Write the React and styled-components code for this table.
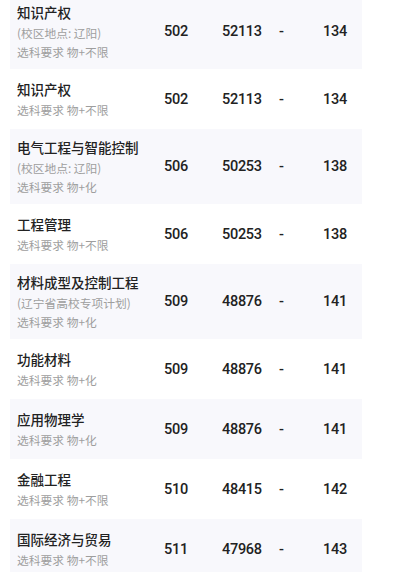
import React from "react";
import styled, { createGlobalStyle } from "styled-components";

const GlobalStyle = createGlobalStyle`
	html, body {
		margin: 0;
		padding: 0;
		background: #ffffff;
	}
	body {
		font-family: "Noto Sans", "Noto Sans CJK SC", sans-serif;
		-webkit-font-smoothing: antialiased;
	}
`;

const Page = styled.div`
	width: 400px;
	height: 572px;
	overflow: hidden;
	background: #ffffff;
`;

// list is scrolled a few pixels past the first row's top
const List = styled.div`
	margin-top: -6px;
	padding: 0 38px 0 10px;
`;

const Row = styled.div`
	display: grid;
	grid-template-columns: 147px 58px 57px 44px 1fr;
	align-items: center;
	box-sizing: border-box;
	min-height: 60px;
	padding: 8px 0 8px 7px;
	background: ${(p) => (p.$shaded ? "#f8f8fc" : "transparent")};
`;

const NameCell = styled.div`
	display: flex;
	flex-direction: column;
`;

const Title = styled.div`
	font-family: "Noto Sans CJK SC", "Noto Sans", sans-serif;
	font-size: 13.5px;
	font-weight: 500;
	line-height: 21px;
	color: #222222;
	white-space: nowrap;
`;

const SubLine = styled.div`
	font-family: "Noto Sans CJK SC", "Noto Sans", sans-serif;
	font-size: 11.75px;
	line-height: 19px;
	color: #9e9e9e;
	white-space: nowrap;
`;

const Num = styled.div`
	font-family: Roboto, "Noto Sans", sans-serif;
	font-size: 14.5px;
	font-weight: 500;
	letter-spacing: -0.3px;
	color: #222222;
	white-space: nowrap;
`;

const rows = [
	{ name: "知识产权", note: "(校区地点: 辽阳)", req: "物+不限", score: 502, rank: 52113, diff: 134 },
	{ name: "知识产权", req: "物+不限", score: 502, rank: 52113, diff: 134 },
	{ name: "电气工程与智能控制", note: "(校区地点: 辽阳)", req: "物+化", score: 506, rank: 50253, diff: 138 },
	{ name: "工程管理", req: "物+不限", score: 506, rank: 50253, diff: 138 },
	{ name: "材料成型及控制工程", note: "(辽宁省高校专项计划)", req: "物+化", score: 509, rank: 48876, diff: 141 },
	{ name: "功能材料", req: "物+化", score: 509, rank: 48876, diff: 141 },
	{ name: "应用物理学", req: "物+化", score: 509, rank: 48876, diff: 141 },
	{ name: "金融工程", req: "物+不限", score: 510, rank: 48415, diff: 142 },
	{ name: "国际经济与贸易", req: "物+不限", score: 511, rank: 47968, diff: 143 },
];

const App = () => {
	return (
		<>
			<GlobalStyle />
			<Page>
				<List>
					{rows.map((r, i) => (
						<Row key={i} $shaded={i % 2 === 0}>
							<NameCell>
								<Title>{r.name}</Title>
								{r.note && <SubLine>{r.note}</SubLine>}
								<SubLine>选科要求 {r.req}</SubLine>
							</NameCell>
							<Num>{r.score}</Num>
							<Num>{r.rank}</Num>
							<Num>-</Num>
							<Num>{r.diff}</Num>
						</Row>
					))}
				</List>
			</Page>
		</>
	);
};

export default App;
